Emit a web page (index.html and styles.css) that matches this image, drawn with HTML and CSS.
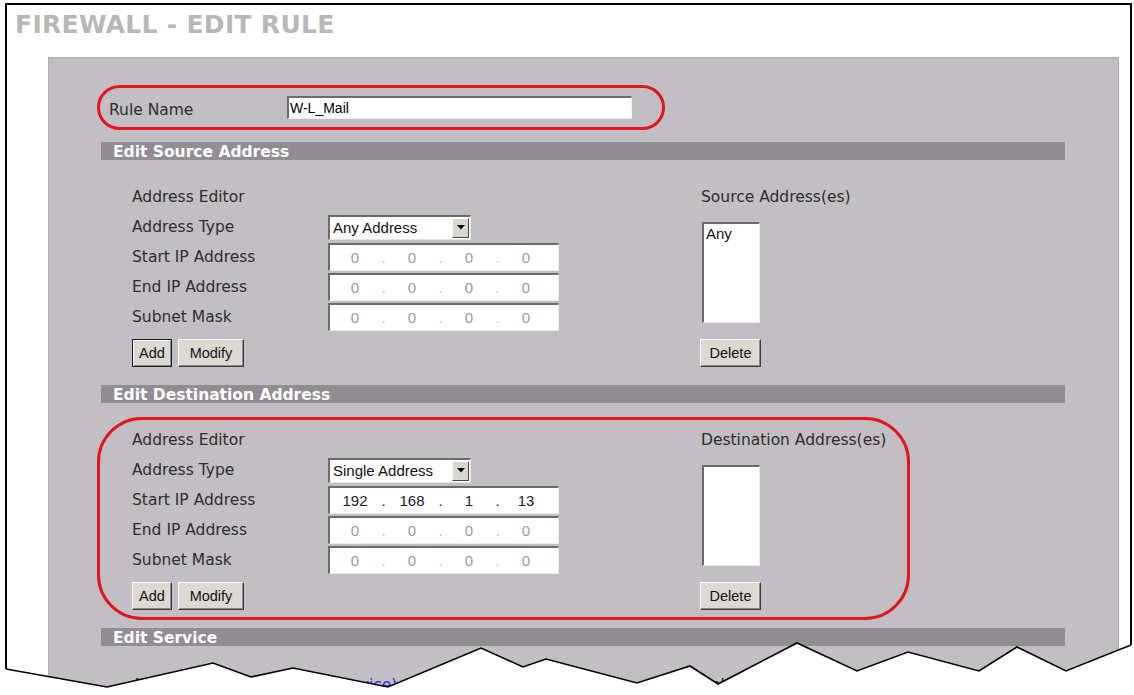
FILE: index.html
```html
<!DOCTYPE html>
<html lang="en">
<head>
<meta charset="utf-8">
<title>Firewall - Edit Rule</title>
<link rel="stylesheet" href="styles.css">
</head>
<body>
<div class="page">
  <h1 class="title">FIREWALL - EDIT RULE</h1>

  <div class="panel">
    <div class="rule-row">
      <span class="rule-label">Rule Name</span>
      <div class="text-input">W-L_Mail</div>
    </div>

    <div class="bar bar-first">Edit Source Address</div>
    <div class="section">
      <div class="editor">
        <div class="row"><span class="lbl">Address Editor</span></div>
        <div class="row">
          <span class="lbl">Address Type</span>
          <div class="select">
            <span class="select-text">Any Address</span>
            <span class="select-btn"><svg width="8" height="5" viewBox="0 0 8 5"><polygon points="0,0 8,0 4,4.5" fill="#000"/></svg></span>
          </div>
        </div>
        <div class="row">
          <span class="lbl">Start IP Address</span>
          <div class="ip disabled"><span class="oct">0</span><span class="dot">.</span><span class="oct">0</span><span class="dot">.</span><span class="oct">0</span><span class="dot">.</span><span class="oct">0</span></div>
        </div>
        <div class="row">
          <span class="lbl">End IP Address</span>
          <div class="ip disabled"><span class="oct">0</span><span class="dot">.</span><span class="oct">0</span><span class="dot">.</span><span class="oct">0</span><span class="dot">.</span><span class="oct">0</span></div>
        </div>
        <div class="row">
          <span class="lbl">Subnet Mask</span>
          <div class="ip disabled"><span class="oct">0</span><span class="dot">.</span><span class="oct">0</span><span class="dot">.</span><span class="oct">0</span><span class="dot">.</span><span class="oct">0</span></div>
        </div>
        <div class="buttons">
          <button class="btn btn-add is-default">Add</button>
          <button class="btn btn-modify">Modify</button>
        </div>
      </div>
      <div class="list-col">
        <div class="row"><span class="lbl">Source Address(es)</span></div>
        <div class="listbox"><div class="opt">Any</div></div>
        <div class="buttons"><button class="btn btn-delete">Delete</button></div>
      </div>
    </div>

    <div class="bar">Edit Destination Address</div>
    <div class="section marked">
      <div class="editor">
        <div class="row"><span class="lbl">Address Editor</span></div>
        <div class="row">
          <span class="lbl">Address Type</span>
          <div class="select">
            <span class="select-text">Single Address</span>
            <span class="select-btn"><svg width="8" height="5" viewBox="0 0 8 5"><polygon points="0,0 8,0 4,4.5" fill="#000"/></svg></span>
          </div>
        </div>
        <div class="row">
          <span class="lbl">Start IP Address</span>
          <div class="ip"><span class="oct">192</span><span class="dot">.</span><span class="oct">168</span><span class="dot">.</span><span class="oct">1</span><span class="dot">.</span><span class="oct">13</span></div>
        </div>
        <div class="row">
          <span class="lbl">End IP Address</span>
          <div class="ip disabled"><span class="oct">0</span><span class="dot">.</span><span class="oct">0</span><span class="dot">.</span><span class="oct">0</span><span class="dot">.</span><span class="oct">0</span></div>
        </div>
        <div class="row">
          <span class="lbl">Subnet Mask</span>
          <div class="ip disabled"><span class="oct">0</span><span class="dot">.</span><span class="oct">0</span><span class="dot">.</span><span class="oct">0</span><span class="dot">.</span><span class="oct">0</span></div>
        </div>
        <div class="buttons">
          <button class="btn btn-add">Add</button>
          <button class="btn btn-modify">Modify</button>
        </div>
      </div>
      <div class="list-col">
        <div class="row"><span class="lbl">Destination Address(es)</span></div>
        <div class="listbox"></div>
        <div class="buttons"><button class="btn btn-delete">Delete</button></div>
      </div>
    </div>

    <div class="bar">Edit Service</div>
    <div class="section service">
      <div class="editor">
        <div class="row"><span class="lbl">Available Services</span><a class="link" href="#">(Service)</a></div>
      </div>
      <div class="list-col">
        <div class="row"><span class="lbl">Selected Service(s)</span></div>
      </div>
    </div>
  </div>

  <!-- page frame with the torn lower edge -->
  <svg class="torn" width="1134" height="695" viewBox="0 0 1134 695">
    <polygon fill="#fff" points="0,669 6,669 107,687 213,663 251,677 293,668 388,687 481,648 523,667 546,659 637,683 690,666 718,684 797,643 857,671 908,652 979,671 1017,647 1066,671 1131,645 1134,645 1134,695 0,695"/>
    <path d="M6,669 V4 H1131 V645" fill="none" stroke="#000" stroke-width="2"/>
    <polyline fill="none" stroke="#000" stroke-width="1.6" stroke-linejoin="miter" points="6,669 107,687 213,663 251,677 293,668 388,687 481,648 523,667 546,659 637,683 690,666 718,684 797,643 857,671 908,652 979,671 1017,647 1066,671 1131,645"/>
  </svg>
</div>
</body>
</html>
```

FILE: styles.css
```css
* { box-sizing: border-box; }

html, body { margin: 0; padding: 0; }

body {
  width: 1134px;
  height: 695px;
  overflow: hidden;
  background: #fff;
  font-family: "DejaVu Sans", Verdana, sans-serif;
  color: #2e2e2e;
}

.page {
  position: relative;
  width: 1134px;
  height: 695px;
  padding-top: 10px;
  overflow: hidden;
}

.title {
  margin: 0 0 17px 15px;
  font: bold 25px/30px "DejaVu Sans", Verdana, sans-serif;
  letter-spacing: 0.3px;
  color: #b7b7b7;
}

/* grey form panel; its lower part is cut off by the torn edge */
.panel {
  margin-left: 48px;
  width: 1071px;
  height: 638px;
  overflow: hidden;
  background: #c2bec4;
  border: 1px solid #aeacb0;
  border-bottom: 0;
  padding-top: 27px;
}

/* rule name row, outlined in red */
.rule-row {
  display: flex;
  align-items: center;
  margin-left: 48px;
  width: 568px;
  height: 45px;
  border: 3px solid #e3151d;
  border-radius: 23px;
  padding-left: 9px;
}

.rule-label {
  width: 178px;
  font-size: 15.5px;
  padding-top: 5px;
}

.text-input {
  display: flex;
  align-items: center;
  width: 345px;
  height: 23px;
  background: #fff;
  border-style: solid;
  border-width: 2px 1px 1px 2px;
  border-color: #6b6b6b #f2f2f2 #f2f2f2 #6b6b6b;
  padding-left: 1px;
  font: 14px "Liberation Sans", Arial, sans-serif;
  color: #000;
}

/* section header bars */
.bar {
  margin: 0 0 0 52px;
  width: 964px;
  height: 18px;
  background: #918d93;
  color: #fff;
  font-weight: bold;
  font-size: 15.5px;
  line-height: 20px;
  padding-left: 12px;
  white-space: nowrap;
}

.bar-first { margin-top: 12px; }

/* address editor block */
.section {
  display: flex;
  margin: 14px 0 8px 48px;
  width: 813px;
  height: 203px;
  border: 3px solid transparent;
  border-radius: 45px;
  padding: 5px 0 0 32px;
}

.section.marked { border-color: #e3151d; }

.section.service { height: auto; margin-top: 16px; margin-bottom: 0; }

.editor { width: 568px; }

.row {
  display: flex;
  align-items: center;
  height: 30px;
}

.lbl {
  font-size: 15.5px;
  white-space: nowrap;
}

.editor .lbl { width: 196px; }

.select {
  display: flex;
  width: 143px;
  height: 25px;
  background: #fff;
  border-style: solid;
  border-width: 2px 1px 1px 2px;
  border-color: #6b6b6b #e4e4e4 #e4e4e4 #6b6b6b;
}

.select-text {
  flex: 1;
  display: flex;
  align-items: center;
  padding-left: 3px;
  font: 15px "Liberation Sans", Arial, sans-serif;
  color: #111;
  white-space: nowrap;
}

.select-btn {
  display: flex;
  align-items: center;
  justify-content: center;
  width: 17px;
  margin: 1px 1px 1px 0;
  background: #d9d6cf;
  border: 1px solid;
  border-color: #fff #4a4a4a #4a4a4a #fff;
}

.ip {
  display: flex;
  align-items: center;
  width: 231px;
  height: 28px;
  background: #fff;
  border-style: solid;
  border-width: 2px 1px 1px 2px;
  border-color: #6b6b6b #ececec #ececec #6b6b6b;
  padding-left: 4px;
  font: 15px "Liberation Sans", Arial, sans-serif;
  color: #1e1e1e;
}

.ip .oct { width: 42px; text-align: center; }
.ip .dot { width: 15px; text-align: center; }
.ip.disabled { color: #9c9c9c; }
.ip.disabled .dot { color: #c2c2c2; }

.buttons {
  display: flex;
  gap: 6px;
  margin-top: 7px;
}

.btn {
  height: 28px;
  padding: 0;
  font: 14.5px "Liberation Sans", Arial, sans-serif;
  color: #111;
  background: #dcd9d2;
  border: 1px solid;
  border-color: #fafafa #3c3c3c #3c3c3c #fafafa;
  box-shadow: inset -1px -1px 0 #8a8a8a;
}

.btn.is-default {
  border-color: #1a1a1a;
  box-shadow: inset 1px 1px 0 #fff, inset -1px -1px 0 #8a8a8a;
}

.btn-add { width: 40px; }
.btn-modify { width: 66px; }
.btn-delete { width: 61px; }

/* right column: address list */
.list-col { padding-left: 1px; }

.listbox {
  margin: 10px 0 0 1px;
  width: 58px;
  height: 101px;
  background: #fff;
  border-style: solid;
  border-width: 2px 1px 1px 2px;
  border-color: #6b6b6b #ececec #ececec #6b6b6b;
  padding: 1px 2px;
  font: 15px/17px "Liberation Sans", Arial, sans-serif;
  color: #111;
}

.list-col .buttons {
  margin-top: 16px;
  margin-left: -1px;
}

.link {
  font-size: 15.5px;
  color: #2b2bd6;
  text-decoration: none;
}

.torn {
  position: absolute;
  top: 0;
  left: 0;
  pointer-events: none;
}
```
